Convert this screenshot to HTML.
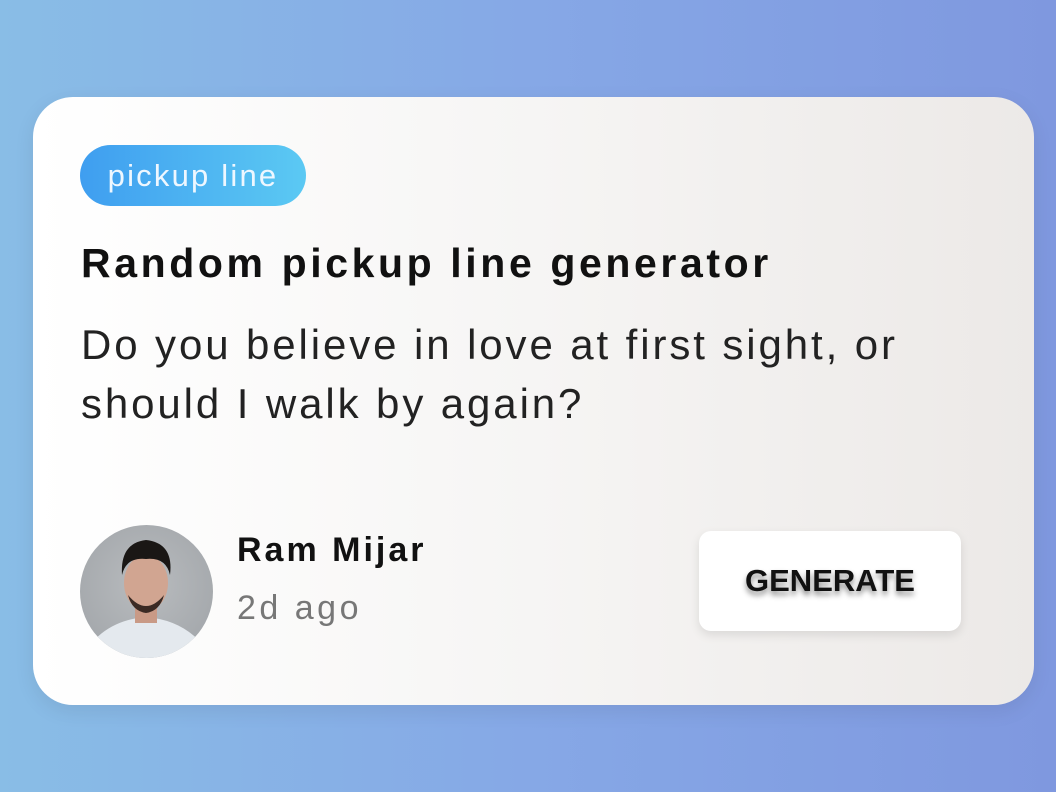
<!DOCTYPE html>
<html><head><style>
html,body{margin:0;width:1056px;height:792px;overflow:hidden;font-family:"Liberation Sans",sans-serif;}
body{background:linear-gradient(90deg,#89bde6 0%,#86a8e6 50%,#7f98df 100%);position:relative;}
.card{position:absolute;left:33px;top:97px;width:1001px;height:608px;border-radius:40px;background:linear-gradient(90deg,#fff 0%,#f6f5f4 50%,#ece9e7 100%);box-shadow:0 6px 20px rgba(0,0,0,.08);}
.tag{position:absolute;left:47px;top:48px;width:226px;height:61px;border-radius:31px;background:linear-gradient(90deg,#3f9ef0,#5bc9f3);color:#eef7ff;font-size:31px;line-height:61px;text-align:center;letter-spacing:2.2px;}
h1{position:absolute;left:48px;top:143px;margin:0;font-size:41px;font-weight:bold;color:#111;letter-spacing:3.6px;}
.q{position:absolute;left:48px;top:218px;font-size:42px;line-height:59px;color:#222;letter-spacing:2.9px;}
.av{position:absolute;left:47px;top:428px;width:133px;height:133px;border-radius:50%;background:radial-gradient(circle at 50% 45%,#b9bcbf,#9ea2a6);overflow:hidden;}
.name{position:absolute;left:204px;top:434px;font-size:34px;font-weight:bold;color:#111;letter-spacing:3px;}
.ago{position:absolute;left:204px;top:492px;font-size:34px;color:#777;letter-spacing:3.5px;}
.btn{position:absolute;left:666px;top:434px;width:262px;height:100px;border-radius:12px;background:#fff;box-shadow:0 4px 10px rgba(0,0,0,.1);font-size:31px;font-weight:bold;text-align:center;line-height:100px;color:#111;text-shadow:0 4px 6px rgba(0,0,0,.45);}
</style></head><body>
<div class="card">
<div class="tag">pickup line</div>
<h1>Random pickup line generator</h1>
<div class="q">Do you believe in love at first sight, or<br>should I walk by again?</div>
<div class="av"><svg width="133" height="133">
<path d="M10 120 Q30 95 66 92 Q102 95 123 120 L133 133 L0 133Z" fill="#e4e9ee"/>
<rect x="55" y="78" width="22" height="20" fill="#c99a86"/>
<ellipse cx="66" cy="58" rx="22" ry="28" fill="#d1a591"/>
<path d="M42 50 Q40 18 66 15 Q94 18 90 50 Q86 32 66 34 Q46 32 42 50Z" fill="#1a1715"/>
<path d="M48 70 Q66 92 84 70 Q80 86 66 88 Q52 86 48 70Z" fill="#3a2a24"/>
</svg></div>
<div class="name">Ram Mijar</div>
<div class="ago">2d ago</div>
<div class="btn">GENERATE</div>
</div>
</body></html>
